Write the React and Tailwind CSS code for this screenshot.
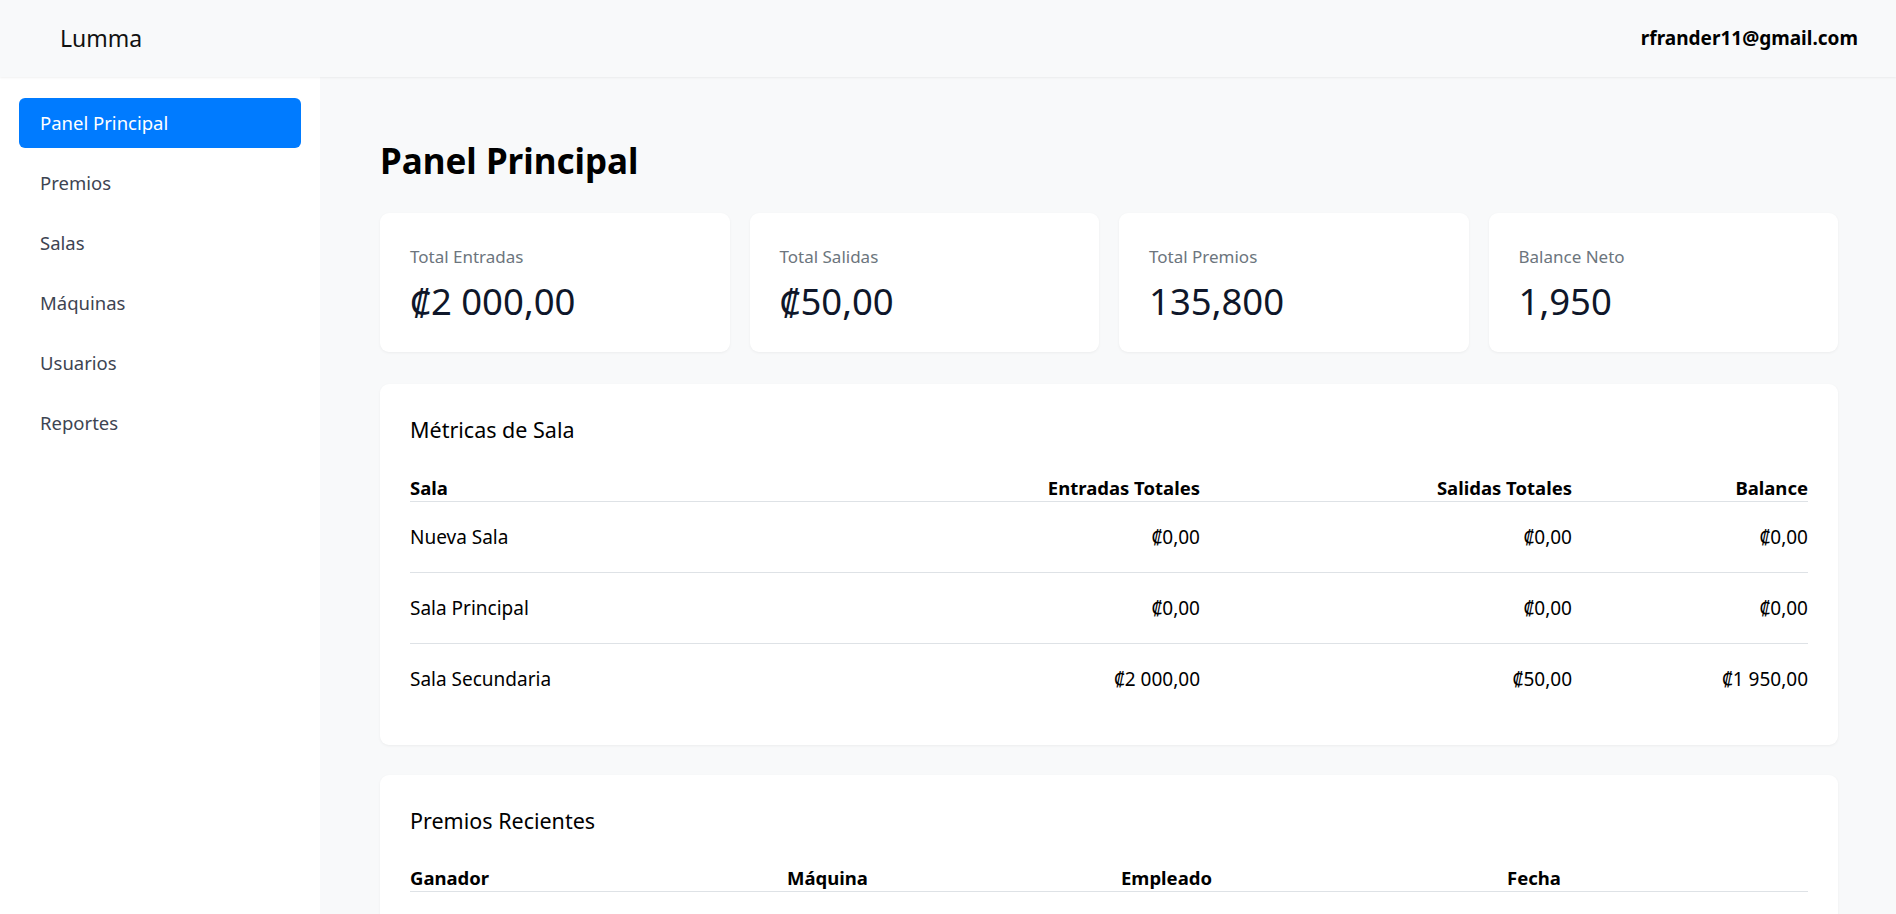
import { useState } from 'react';

const navItems = ['Panel Principal', 'Premios', 'Salas', 'Máquinas', 'Usuarios', 'Reportes'];

const stats = [
  { label: 'Total Entradas', value: '₡2 000,00' },
  { label: 'Total Salidas', value: '₡50,00' },
  { label: 'Total Premios', value: '135,800' },
  { label: 'Balance Neto', value: '1,950' },
];

const salas = [
  { nombre: 'Nueva Sala', entradas: '₡0,00', salidas: '₡0,00', balance: '₡0,00' },
  { nombre: 'Sala Principal', entradas: '₡0,00', salidas: '₡0,00', balance: '₡0,00' },
  { nombre: 'Sala Secundaria', entradas: '₡2 000,00', salidas: '₡50,00', balance: '₡1 950,00' },
];

export default function App() {
  const [active, setActive] = useState('Panel Principal');

  return (
    <div className="min-h-screen bg-[#f8f9fa] font-['Noto_Sans',sans-serif] text-black">
      {/* Barra superior */}
      <header className="h-[77px] flex items-center justify-between pl-[60px] pr-[38px] bg-[#f8f9fa] shadow-[0_1px_2px_rgba(0,0,0,0.06)] relative z-10">
        <span className="text-[23px] text-[#111]">Lumma</span>
        <span className="text-[19px] font-bold text-black">rfrander11@gmail.com</span>
      </header>

      <div className="flex">
        {/* Menú lateral */}
        <aside className="w-[320px] shrink-0 bg-white min-h-[837px] px-[19px] pt-[21px]">
          <nav className="flex flex-col gap-[10px]">
            {navItems.map((item) => (
              <button
                key={item}
                onClick={() => setActive(item)}
                className={`h-[50px] w-full text-left px-[21px] rounded-[6px] text-[18.5px] ${active === item ? 'bg-[#007bff] text-white' : 'text-[#3d4452]'}`}
              >
                {item}
              </button>
            ))}
          </nav>
        </aside>

        {/* Contenido */}
        <main className="flex-1 pl-[60px] pr-[58px] pt-[63px] pb-10">
          <h1 className="text-[35px] font-bold leading-[1.2] mb-[31px]">Panel Principal</h1>

          <div className="grid grid-cols-4 gap-[20px]">
            {stats.map((s) => (
              <div key={s.label} className="bg-white rounded-[9px] h-[139px] px-[30px] pt-[31px] shadow-[0_1px_3px_rgba(0,0,0,0.05)]">
                <div className="text-[17px] text-[#6c757d] leading-[1.5]">{s.label}</div>
                <div className="text-[36.5px] text-[#0f172a] leading-[1.3] mt-[8px]">{s.value}</div>
              </div>
            ))}
          </div>

          <section className="bg-white rounded-[9px] mt-[32px] p-[30px] shadow-[0_1px_3px_rgba(0,0,0,0.05)]">
            <h2 className="text-[21.5px] leading-[1.2] pt-[3px]">Métricas de Sala</h2>
            <div className="mt-[31px]">
              <div className="grid grid-cols-[400px_390px_372px_1fr] text-[18.5px] font-bold h-[28px] items-start border-b border-[#dee2e6]">
                <div>Sala</div>
                <div className="text-right">Entradas Totales</div>
                <div className="text-right">Salidas Totales</div>
                <div className="text-right">Balance</div>
              </div>
              {salas.map((s, i) => (
                <div key={s.nombre} className={`grid grid-cols-[400px_390px_372px_1fr] text-[19px] h-[71px] items-center ${i < salas.length - 1 ? 'border-b border-[#dee2e6]' : ''}`}>
                  <div>{s.nombre}</div>
                  <div className="text-right">{s.entradas}</div>
                  <div className="text-right">{s.salidas}</div>
                  <div className="text-right">{s.balance}</div>
                </div>
              ))}
            </div>
          </section>

          <section className="bg-white rounded-[9px] mt-[30px] p-[30px] shadow-[0_1px_3px_rgba(0,0,0,0.05)]">
            <h2 className="text-[21.5px] leading-[1.2] pt-[3px]">Premios Recientes</h2>
            <div className="mt-[30px]">
              <div className="grid grid-cols-[377px_334px_386px_1fr] text-[18.5px] font-bold h-[28px] items-start border-b border-[#dee2e6]">
                <div>Ganador</div>
                <div>Máquina</div>
                <div>Empleado</div>
                <div>Fecha</div>
              </div>
              <div className="h-[60px]"></div>
            </div>
          </section>
        </main>
      </div>
    </div>
  );
}
